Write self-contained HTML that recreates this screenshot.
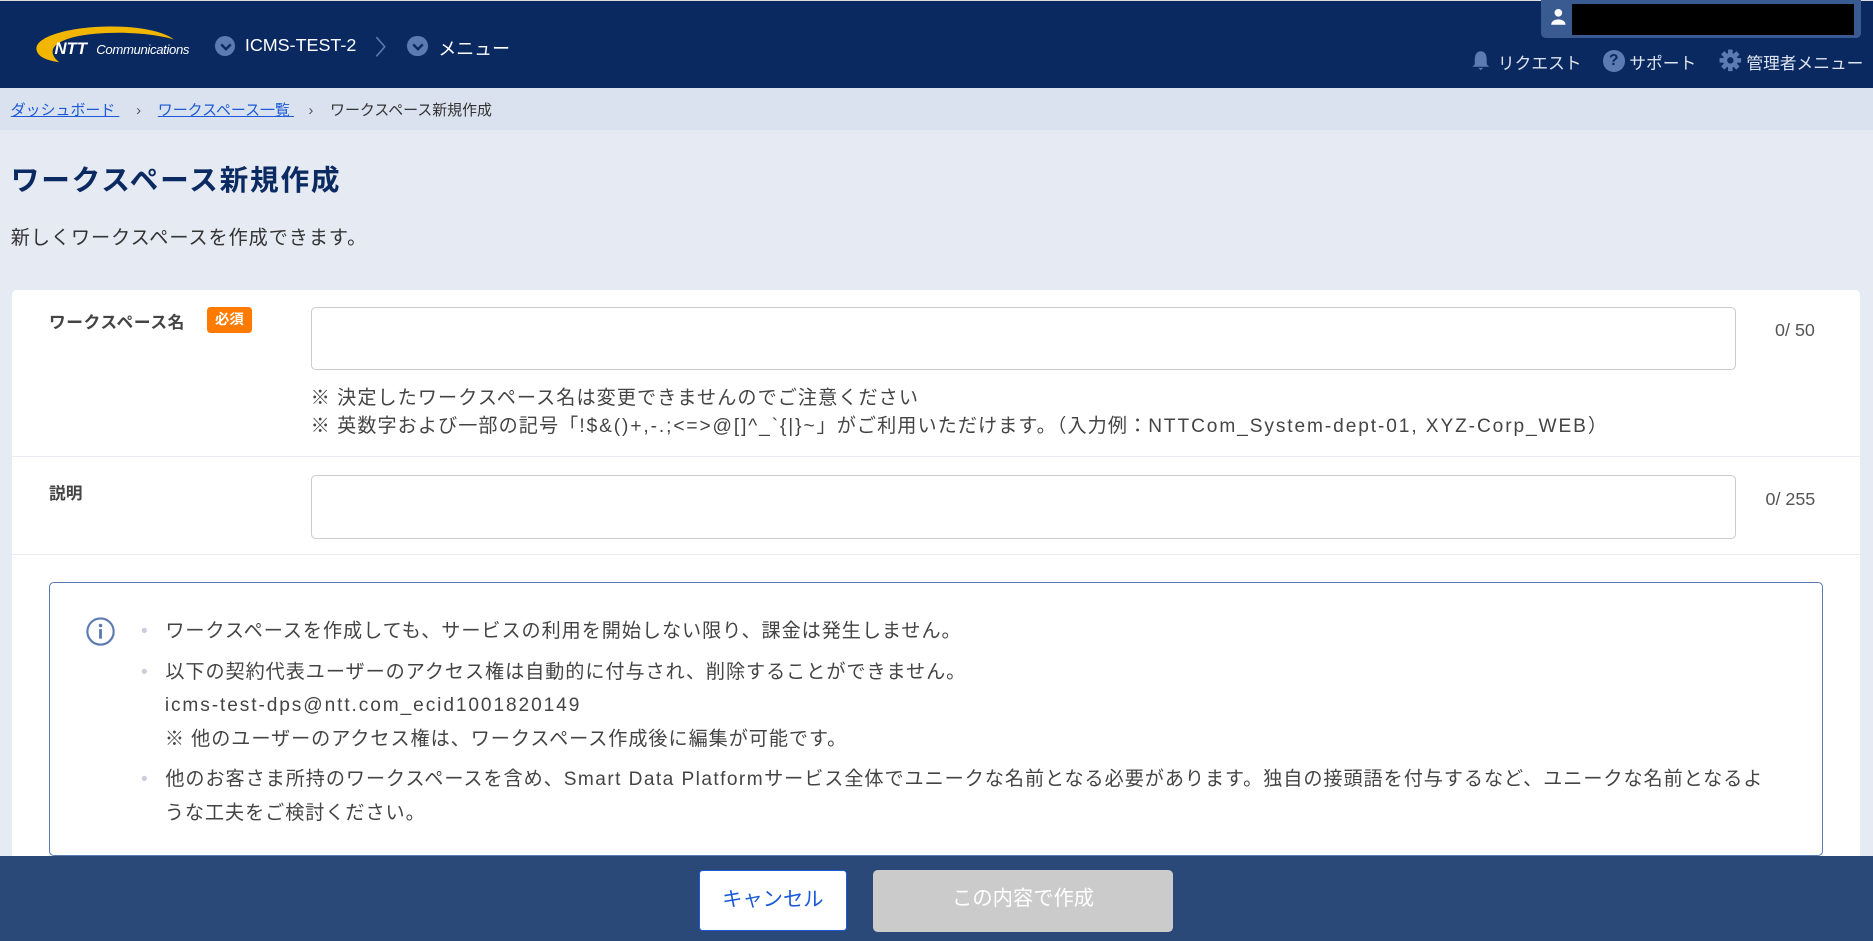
<!DOCTYPE html>
<html><head><meta charset="utf-8"><style>
html,body{margin:0;padding:0;width:1873px;height:941px;overflow:hidden;background:#e5eaf3}
#w{zoom:1.19451;width:1568px;height:788px;position:relative;font-family:"Liberation Sans","Noto Sans CJK JP",sans-serif;color:#333;overflow:hidden}
.a{position:absolute;white-space:nowrap}
.hd{left:0;top:0;width:1568px;height:74px;background:#0a2960;border-top:1px solid #ddd;box-sizing:border-box}
.bc{left:0;top:74px;width:1568px;height:35px;background:#dbe2ef;font-size:13px}
.card{left:10px;top:243px;width:1547px;height:545px;background:#fff;border-radius:4px}
.inp{border:1px solid #ccc;border-radius:4px;background:#fff;box-sizing:border-box}
.circ{width:17px;height:17px;border-radius:50%;background:#5d7bb3;display:inline-block}
.l{letter-spacing:1.6px}
</style></head><body><div id="w">
<div class="a hd"></div>
<svg class="a" style="left:28px;top:20px" width="140" height="36" viewBox="0 0 140 36">
<path d="M3 22 C0 8 45 -1 85 3 C103 5 113 9 118 13 C100 7 60 5 34 11 C15 16 12 24 22 32 C8 30 4 26 3 22Z" fill="#f2b600"/>
<text x="18" y="25" font-family="Liberation Sans" font-weight="bold" font-style="italic" font-size="14" fill="#fff">NTT</text>
<text x="53" y="25" font-family="Liberation Sans" font-style="italic" font-size="11" fill="#fff" textLength="78">Communications</text></svg>
<div class="a" style="left:180px;top:30px"><span class="circ"></span></div>
<svg class="a" style="left:184px;top:35px" width="10" height="8"><path d="M1 2 L5 6 L9 2" stroke="#0a2960" stroke-width="2" fill="none"/></svg>
<div class="a" style="left:205px;top:29px;color:#fff;font-size:15px">ICMS-TEST-2</div>
<svg class="a" style="left:313px;top:30px" width="12" height="18"><path d="M2 1 L9 9 L2 17" stroke="#5d7bb3" stroke-width="1.3" fill="none"/></svg>
<div class="a" style="left:341px;top:30px"><span class="circ"></span></div>
<svg class="a" style="left:345px;top:35px" width="10" height="8"><path d="M1 2 L5 6 L9 2" stroke="#0a2960" stroke-width="2" fill="none"/></svg>
<div class="a" style="left:367px;top:29px;color:#fff;font-size:15px">メニュー</div>
<div class="a" style="left:1290px;top:0;width:268px;height:32px;background:#3a5a92;border-radius:0 0 4px 4px"></div>
<div class="a" style="left:1316px;top:3px;width:236px;height:26px;background:#000"></div>
<svg class="a" style="left:1298px;top:7px" width="14" height="14"><circle cx="7" cy="4" r="3.2" fill="#fff"/><path d="M1 14 C1 8 13 8 13 14Z" fill="#fff"/></svg>
<svg class="a" style="left:1231px;top:42px" width="18" height="18"><path d="M9 1 C5 1 4 5 4 8 L4 12 L2 14 L16 14 L14 12 L14 8 C14 5 13 1 9 1Z M7 15 L11 15 L9 17Z" fill="#5d7bb3"/></svg>
<div class="a" style="left:1254px;top:42px;color:#dfe5f0;font-size:14px">リクエスト</div>
<div class="a" style="left:1342px;top:42px;width:18px;height:18px;border-radius:50%;background:#5d7bb3;color:#0a2960;font-weight:bold;font-size:13px;text-align:center;line-height:18px">?</div>
<div class="a" style="left:1364px;top:42px;color:#dfe5f0;font-size:14px">サポート</div>
<svg class="a" style="left:1439px;top:41px" width="19" height="19" viewBox="0 0 20 20"><g fill="#5d7bb3"><circle cx="10" cy="10" r="6.5"/><rect x="8" y="0.5" width="4" height="19"/><rect x="0.5" y="8" width="19" height="4"/><rect x="8" y="0.5" width="4" height="19" transform="rotate(45 10 10)"/><rect x="8" y="0.5" width="4" height="19" transform="rotate(-45 10 10)"/></g><circle cx="10" cy="10" r="2.8" fill="#0a2960"/></svg>
<div class="a" style="left:1462px;top:42px;color:#dfe5f0;font-size:14px">管理者メニュー</div>
<div class="a bc"></div>
<div class="a" style="left:9px;top:83px;font-size:12.5px"><a style="color:#1a5ad8;text-decoration:underline">ダッシュボード </a><span style="margin:0 14px 0 14px;color:#555">›</span><a style="color:#1a5ad8;text-decoration:underline">ワークスペース一覧 </a><span style="margin:0 14px 0 12px;color:#555">›</span>ワークスペース新規作成</div>
<div class="a" style="left:9px;top:132px;font-size:24px;font-weight:bold;color:#0b2a62;letter-spacing:1.5px">ワークスペース新規作成</div>
<div class="a" style="left:9px;top:186px;font-size:16px;letter-spacing:0.8px">新しくワークスペースを作成できます。</div>
<div class="a card"></div>
<div class="a" style="left:41px;top:259px;font-size:14px;font-weight:bold;color:#444;letter-spacing:0.5px">ワークスペース名</div>
<div class="a" style="left:173px;top:257px;width:38px;height:22px;background:#ff7b00;border-radius:3px;color:#fff;font-size:12px;font-weight:bold;text-align:center;line-height:22px">必須</div>
<div class="a inp" style="left:260px;top:257px;width:1193px;height:53px"></div>
<div class="a" style="left:1486px;top:268px;font-size:15px;color:#555">0/ 50</div>
<div class="a" style="left:260px;top:322px;font-size:16px;color:#444;line-height:24px;letter-spacing:0.9px">※ 決定したワークスペース名は変更できませんのでご注意ください<br>※ 英数字および一部の記号「<span class="l">!$&amp;()+,-.;&lt;=&gt;@[]^_`{|}~</span>」がご利用いただけます。（入力例：<span class="l">NTTCom_System-dept-01, XYZ-Corp_WEB</span>）</div>
<div class="a" style="left:10px;top:382px;width:1547px;height:1px;background:#e8ecf2"></div>
<div class="a" style="left:41px;top:402px;font-size:14px;font-weight:bold;color:#444">説明</div>
<div class="a inp" style="left:260px;top:398px;width:1193px;height:53px"></div>
<div class="a" style="left:1478px;top:409px;font-size:15px;color:#555">0/ 255</div>
<div class="a" style="left:10px;top:464px;width:1547px;height:1px;background:#e8ecf2"></div>
<div class="a" style="left:41px;top:487px;width:1485px;height:230px;border:1.5px solid #5d7bb3;border-radius:4px;box-sizing:border-box"></div>
<svg class="a" style="left:71px;top:516px" width="26" height="26"><circle cx="13" cy="13" r="11" stroke="#5d7bb3" stroke-width="1.8" fill="none"/><circle cx="13" cy="8" r="1.5" fill="#5d7bb3"/><rect x="11.8" y="11" width="2.4" height="8" fill="#5d7bb3"/></svg>
<div class="a" style="left:118px;top:515px;font-size:16px;color:#444;line-height:28px;letter-spacing:0.8px">
<div><span style="color:#ccd;margin-right:14px">•</span>ワークスペースを作成しても、サービスの利用を開始しない限り、課金は発生しません。</div>
<div style="margin-top:6px"><span style="color:#ccd;margin-right:14px">•</span>以下の契約代表ユーザーのアクセス権は自動的に付与され、削除することができません。</div>
<div style="padding-left:20px" class="l">icms-test-dps@ntt.com_ecid1001820149</div>
<div style="padding-left:20px">※ 他のユーザーのアクセス権は、ワークスペース作成後に編集が可能です。</div>
<div style="margin-top:6px"><span style="color:#ccd;margin-right:14px">•</span>他のお客さま所持のワークスペースを含め、<span style="letter-spacing:1.2px">Smart Data Platform</span>サービス全体でユニークな名前となる必要があります。独自の接頭語を付与するなど、ユニークな名前となるよ</div>
<div style="padding-left:20px">うな工夫をご検討ください。</div>
</div>
<div class="a" style="left:0;top:717px;width:1568px;height:71px;background:#2a4878"></div>
<div class="a" style="left:585px;top:728px;width:124px;height:51px;background:#fff;border:1px solid #1a5ad8;border-radius:3px;box-sizing:border-box;color:#1a5ad8;font-size:17px;text-align:center;line-height:49px">キャンセル</div>
<div class="a" style="left:731px;top:728px;width:251px;height:52px;background:#cbcbcb;border-radius:4px;color:#fff;font-size:17px;text-align:center;line-height:50px">この内容で作成</div>
</div></body></html>
